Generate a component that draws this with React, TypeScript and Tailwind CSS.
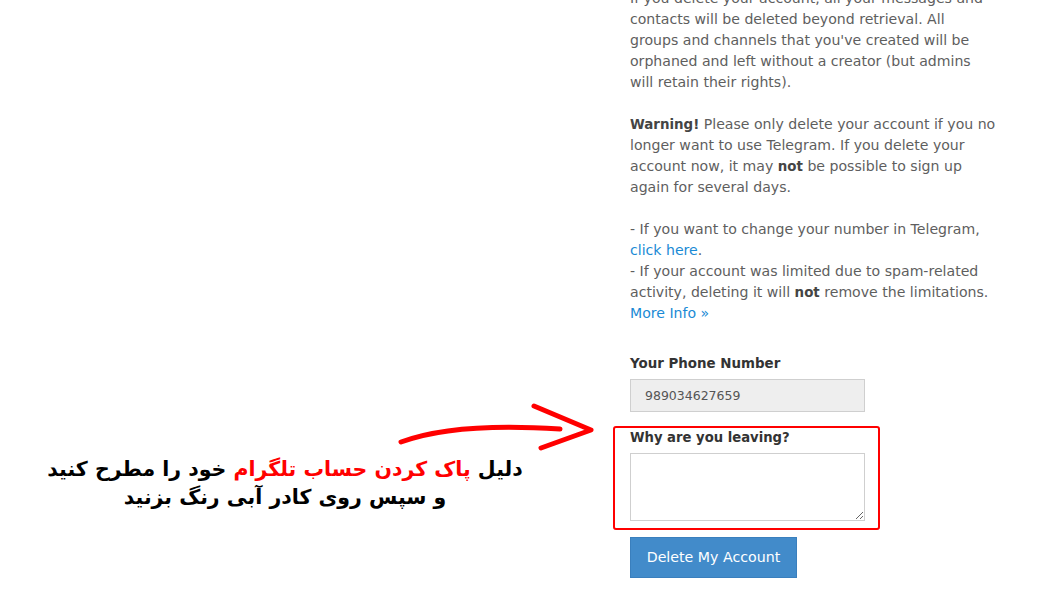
// ─── Delete account page ──────────────────────────────────────────────────────

const Arrow = () => (
  <svg className="absolute left-[395px] top-[398px]" width="205" height="56" viewBox="395 398 205 56" fill="none">
    <path d="M401 442 Q455 422 560 429" stroke="#ff0000" strokeWidth="5" strokeLinecap="round" />
    <path d="M534 406 L591 430 L541 448" stroke="#ff0000" strokeWidth="5" strokeLinecap="round" strokeLinejoin="round" />
  </svg>
);

const Annotation = () => (
  <div className="absolute left-0 top-[455px] w-[570px] text-center font-['DejaVu_Sans',sans-serif] font-bold text-[20.5px] leading-[28px] text-black" dir="rtl">
    <p>
      دلیل <span className="text-[#ff0000]">پاک کردن حساب تلگرام</span> خود را مطرح کنید
    </p>
    <p>و سپس روی کادر آبی رنگ بزنید</p>
  </div>
);

export default function App() {
  return (
    <div className="relative w-[1049px] h-[600px] overflow-hidden bg-white font-['DejaVu_Sans',sans-serif]">
      <div className="ml-[630px] w-[366px] -mt-[12px] text-[14.1px] leading-[21px] text-[#5e5e5e]">
        <p>
          If you delete your account, all your messages and contacts will be deleted beyond retrieval. All
          groups and channels that you've created will be orphaned and left without a creator (but admins
          will retain their rights).
        </p>
        <p className="mt-[21px]">
          <b className="text-[#444] text-[13.4px]">Warning!</b> Please only delete your account if you no longer
          want to use Telegram. If you delete your account now, it may{" "}
          <b className="text-[#444] text-[13.4px]">not</b> be possible to sign up again for several days.
        </p>
        <p className="mt-[21px]">
          - If you want to change your number in Telegram,{" "}
          <a className="text-[#1a8ad5]">click here</a>.
          <br />- If your account was limited due to spam-related activity, deleting it will{" "}
          <b className="text-[#444] text-[13.4px]">not</b> remove the limitations.
          <br />
          <a className="text-[#1a8ad5]">More Info »</a>
        </p>

        {/* Phone */}
        <label className="block mt-[29px] font-bold text-[#333] text-[13.4px] leading-[21px]">Your Phone Number</label>
        <div className="mt-[5px] w-[235px] h-[33px] border border-[#cfcfcf] bg-[#eeeeee] px-[14px] flex items-center text-[12.5px] text-[#555]">
          989034627659
        </div>

        {/* Reason */}
        <div className="mt-[14px] -ml-[17px] w-[267px] h-[104px] border-2 border-[#ff0000] rounded-[3px] pl-[15px]">
          <label className="block font-bold text-[#333] text-[13.2px] leading-[20px]">Why are you leaving?</label>
          <textarea className="block mt-[5px] w-[235px] h-[68px] border border-[#cfcfcf] bg-white outline-none" />
        </div>

        <button
          type="button"
          className="mt-[7px] w-[167px] h-[41px] bg-[#428bca] text-white text-[14.2px] border border-[#3a7fbd]"
        >
          Delete My Account
        </button>
      </div>

      <Arrow />
      <Annotation />
    </div>
  );
}
